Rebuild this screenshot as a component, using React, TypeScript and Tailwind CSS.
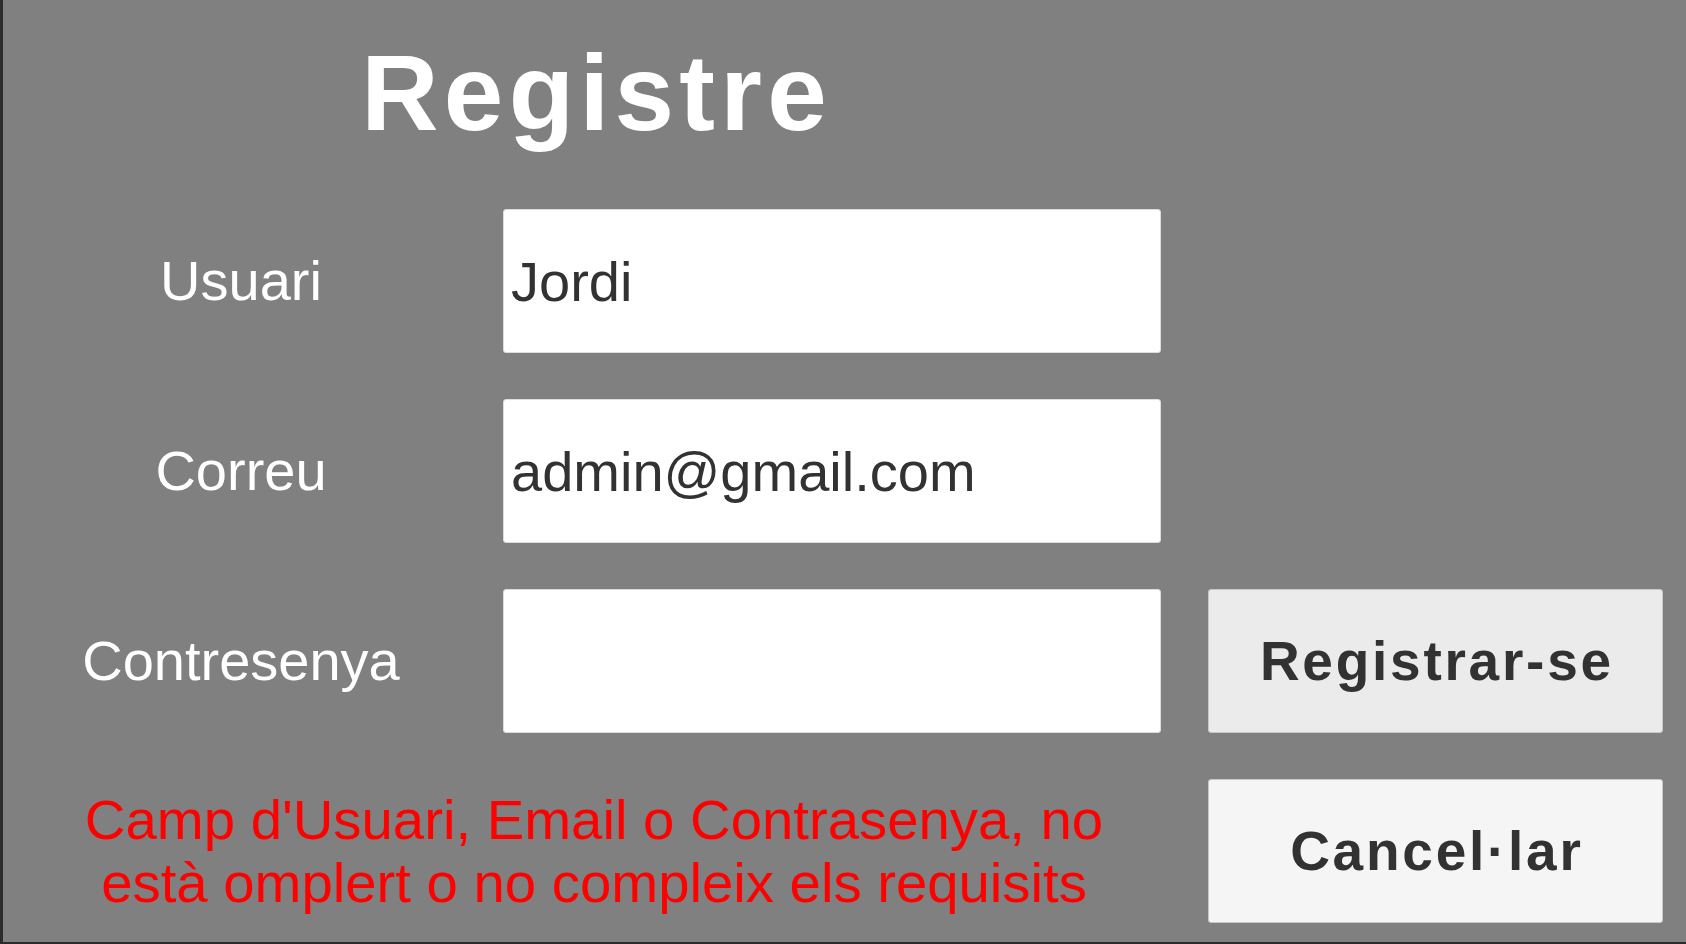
const font = "font-['Liberation_Sans',Arial,sans-serif]";

const Label = ({ text }: { text: string }) => {
  return (
    <div className="w-[476px] text-center text-[56px] leading-none text-white">
      {text}
    </div>
  );
};

const Field = ({ value, type = "text" }: { value: string; type?: string }) => {
  return (
    <input
      type={type}
      readOnly
      defaultValue={value}
      className="ml-[24px] h-full w-[658px] rounded-[3px] border border-[#dcdcdc] bg-white pl-[7px] text-[56px] leading-none text-[#323232] outline-none"
    />
  );
};

const ActionButton = ({ text, tone }: { text: string; tone: string }) => {
  return (
    <button
      type="button"
      className={`h-full w-[455px] rounded-[3px] border border-[#c8c8c8] ${tone} pl-[0.05em] text-[55px] font-bold leading-none tracking-[0.05em] text-[#323232]`}
    >
      {text}
    </button>
  );
};

export default function App() {
  return (
    <div
      className={`flex h-[944px] w-[1686px] flex-col overflow-hidden border-b-[2px] border-l-[3px] border-[#2c2c2c] bg-[#808080] pt-[40px] ${font}`}
    >
      <h1 className="h-[106px] w-[1182px] pl-[0.05em] text-center text-[107px] font-bold leading-[106px] tracking-[0.05em] text-white">
        Registre
      </h1>

      <div className="mt-[63px] flex flex-col gap-y-[46px]">
        <div className="flex h-[144px] items-center">
          <Label text="Usuari" />
          <Field value="Jordi" />
        </div>

        <div className="flex h-[144px] items-center">
          <Label text="Correu" />
          <Field value="admin@gmail.com" />
        </div>

        <div className="flex h-[144px] items-center">
          <Label text="Contresenya" />
          <Field value="" type="password" />
          <div className="ml-[47px] h-full">
            <ActionButton text="Registrar-se" tone="bg-[#ebebeb]" />
          </div>
        </div>

        <div className="flex h-[144px] items-center">
          <p className="w-[1182px] text-center text-[56.3px] leading-[63px] text-[#ff0000]">
            Camp d'Usuari, Email o Contrasenya, no
            <br />
            està omplert o no compleix els requisits
          </p>
          <div className="ml-[23px] h-full">
            <ActionButton text="Cancel·lar" tone="bg-[#f5f5f5]" />
          </div>
        </div>
      </div>
    </div>
  );
}
